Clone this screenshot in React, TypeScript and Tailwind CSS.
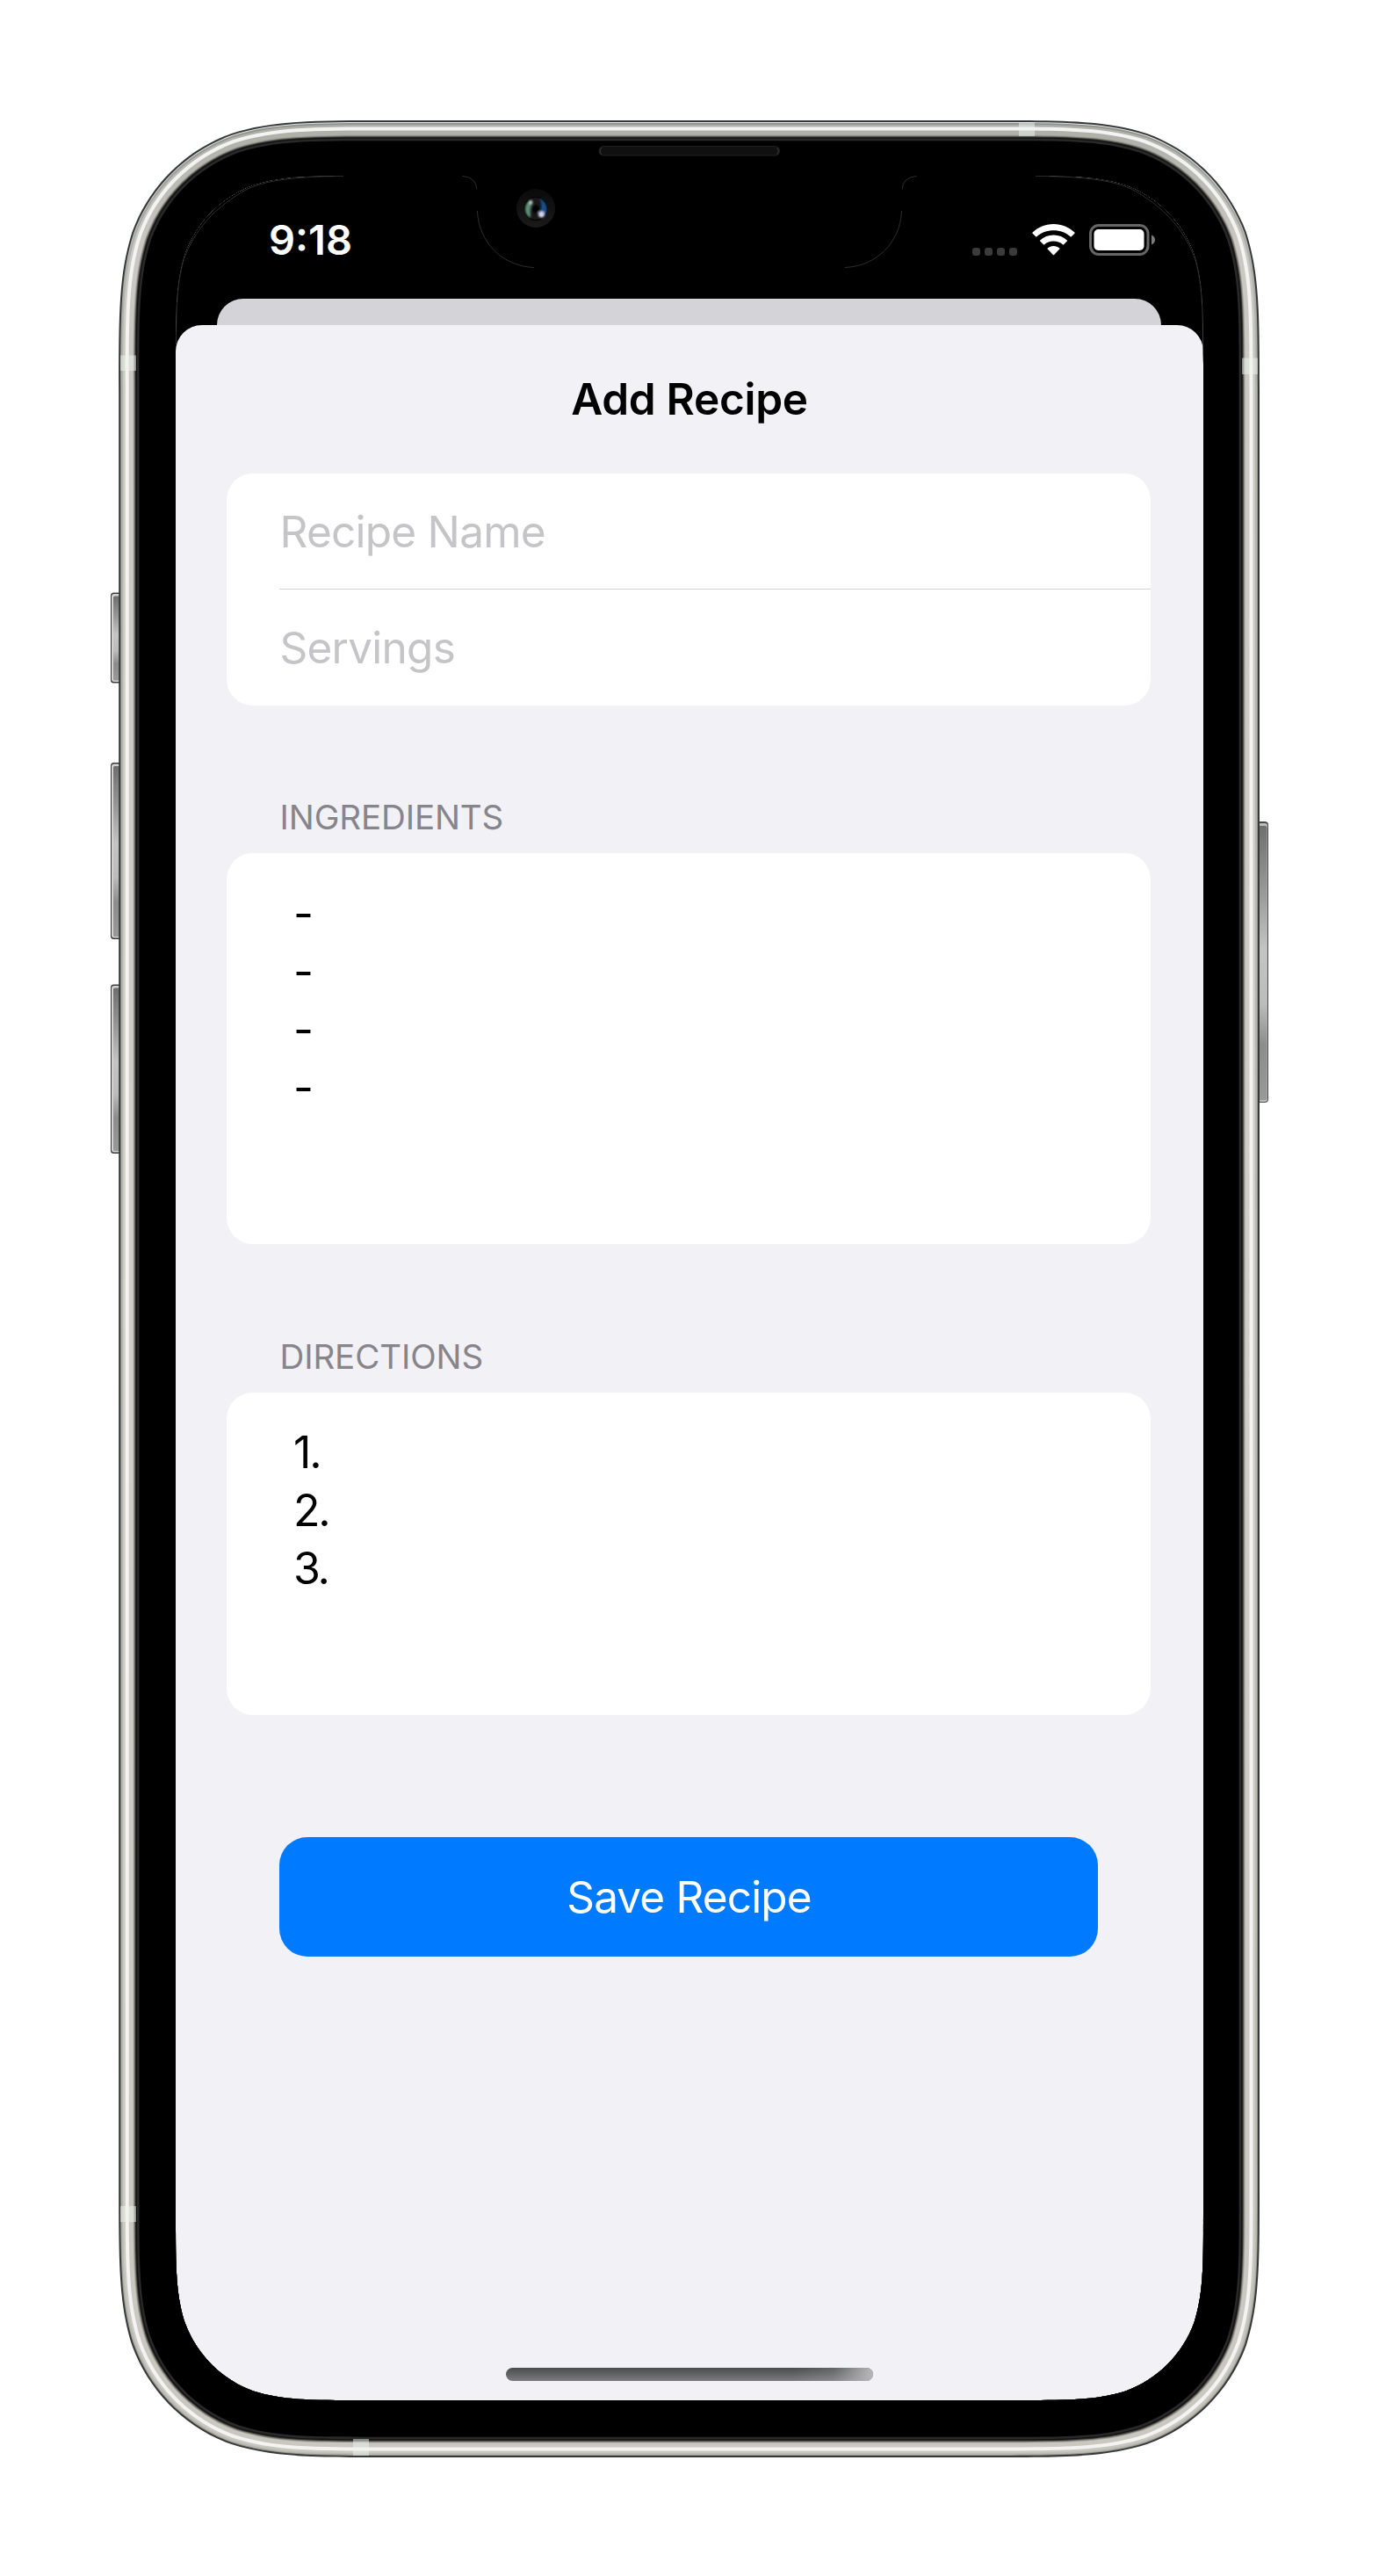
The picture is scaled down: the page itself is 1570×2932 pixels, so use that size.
/** Closed path of a rectangle with iOS-style continuous corners. */
function squircle(x: number, y: number, w: number, h: number, r: number) {
  const a = 1.52866 * r, b = 1.08849 * r, c = 0.86841 * r;
  const d = 0.63149 * r, e = 0.07491 * r, f = 0.37282 * r, g = 0.16906 * r;
  const R = x + w, B = y + h;
  return [
    `M${x + a} ${y}H${R - a}`,
    `C${R - b} ${y} ${R - c} ${y} ${R - d} ${y + e}`,
    `C${R - f} ${y + g} ${R - g} ${y + f} ${R - e} ${y + d}`,
    `C${R} ${y + c} ${R} ${y + b} ${R} ${y + a}V${B - a}`,
    `C${R} ${B - b} ${R} ${B - c} ${R - e} ${B - d}`,
    `C${R - g} ${B - f} ${R - f} ${B - g} ${R - d} ${B - e}`,
    `C${R - c} ${B} ${R - b} ${B} ${R - a} ${B}H${x + a}`,
    `C${x + b} ${B} ${x + c} ${B} ${x + d} ${B - e}`,
    `C${x + f} ${B - g} ${x + g} ${B - f} ${x + e} ${B - d}`,
    `C${x} ${B - c} ${x} ${B - b} ${x} ${B - a}V${y + a}`,
    `C${x} ${y + b} ${x} ${y + c} ${x + e} ${y + d}`,
    `C${x + g} ${y + f} ${x + f} ${y + g} ${x + d} ${y + e}`,
    `C${x + c} ${y} ${x + b} ${y} ${x + a} ${y}Z`,
  ].join("");
}

const SCREEN = squircle(200, 200, 1170, 2532, 140);

/** Frame rings from the outside in: [inset, fill]. */
const LAYERS: [number, string][] = [
  [0, "#363939"],
  [2, "url(#rim)"],
  [3, "url(#outer)"],
  [5, "url(#metal)"],
  [7.5, "#f3f3f1"],
  [11.5, "url(#metal)"],
  [16.5, "#a3a39c"],
  [17.5, "#77776f"],
  [18.5, "#30312f"],
  [19.5, "#121212"],
  [20.8, "#292929"],
  [23.3, "#000"],
];

/** Antenna bands: [x, y, width, height]. */
const BANDS: [number, number, number, number][] = [
  [137, 404.5, 18, 17.5],
  [1414, 407.5, 18, 18.5],
  [1160, 139, 18, 16],
  [402, 2776, 18, 19],
  [137, 2511, 18, 18],
];

/** Left-hand keys: [y, height]. */
const KEYS: [number, number][] = [
  [674.5, 103],
  [868, 201],
  [1120.5, 192.5],
];

function PhoneFrame() {
  return (
    <svg className="pointer-events-none absolute inset-0" width="1570" height="2932" viewBox="0 0 1570 2932">
      <defs>
        <linearGradient id="metal" x1="0" y1="0" x2="0" y2="1">
          <stop offset="0" stopColor="#b0b0ab" />
          <stop offset="0.05" stopColor="#c9c8c2" />
          <stop offset="0.5" stopColor="#cfcec8" />
          <stop offset="1" stopColor="#c8c7c0" />
        </linearGradient>
        <linearGradient id="outer" x1="0" y1="0" x2="0" y2="1">
          <stop offset="0" stopColor="#93938f" />
          <stop offset="0.06" stopColor="#b4b4ae" />
          <stop offset="1" stopColor="#bcbbb3" />
        </linearGradient>
        <linearGradient id="rim" x1="0" y1="0" x2="0" y2="1">
          <stop offset="0" stopColor="#e4e4e4" />
          <stop offset="0.08" stopColor="#9c9c98" />
          <stop offset="1" stopColor="#96968f" />
        </linearGradient>
        <linearGradient id="key" x1="0" y1="0" x2="0" y2="1">
          <stop offset="0" stopColor="#6f6f6f" />
          <stop offset="0.25" stopColor="#9a9a9a" />
          <stop offset="0.45" stopColor="#c4c4c4" />
          <stop offset="0.65" stopColor="#bcbcbc" />
          <stop offset="0.8" stopColor="#8c8c8c" />
          <stop offset="1" stopColor="#999" />
        </linearGradient>
        <linearGradient id="camRing" x1="0" y1="0" x2="0" y2="1">
          <stop offset="0" stopColor="#0a0a0a" />
          <stop offset="1" stopColor="#1a1a1a" />
        </linearGradient>
        <filter id="soft" x="-50%" y="-50%" width="200%" height="200%">
          <feGaussianBlur stdDeviation="0.8" />
        </filter>
      </defs>

      {KEYS.map(([y, h]) => (
        <g key={y}>
          <rect x="126" y={y} width="14" height={h} rx="3.5" fill="#3c3c3c" />
          <rect x="127" y={y + 1.5} width="13" height={h - 3} rx="3" fill="#d2d2d2" />
          <rect x="129" y={y + 4} width="10" height={h - 7} rx="1.5" fill="url(#key)" />
        </g>
      ))}
      <rect x="1428" y="935" width="16" height="320" rx="4" fill="#4a4a4a" />
      <rect x="1428" y="937" width="15" height="317" rx="3" fill="#bdbdbd" />
      <rect x="1428" y="940" width="14.5" height="312" rx="2" fill="url(#key)" />

      {LAYERS.map(([d, fill]) => (
        <path
          key={d}
          fillRule="evenodd"
          fill={fill}
          d={squircle(135.2 + d, 137 + d, 1298.8 - 2 * d, 2660 - 2 * d, 202 - d) + SCREEN}
        />
      ))}
      {BANDS.map(([x, y, w, h]) => (
        <rect key={`${x}-${y}`} x={x} y={y} width={w} height={h} fill="#f0f4ee" fillOpacity="0.5" />
      ))}

      <g fill="none" stroke="#3a3a3a" strokeWidth="0.8">
        <path d="M391 200.4C330 201 302 206 282 215C245 235 221 262 209 296C203 318 200.5 340 200.5 392" />
        <path d="M1179 200.4C1240 201 1268 206 1288 215C1325 235 1349 262 1361 296C1367 318 1369.5 340 1369.5 392" />
        <path d="M526.5 200.4Q542.5 202 542.8 215.5M543.4 240C545 276 572 303 608 304.5" />
        <path d="M1043.5 200.4Q1027.5 202 1027.2 215.5M1026.6 240C1025 276 998 303 962 304.5" />
      </g>

      <rect x="682" y="166.5" width="205.5" height="10.5" rx="5" fill="#101010" stroke="#1e1e1e" />
      <path d="M685 168q-3.5 4 0 8M884.5 168q3.5 4 0 8" fill="none" stroke="#3a3a3a" />

      <circle cx="610" cy="237" r="22" fill="url(#camRing)" />
      <circle cx="610" cy="237.5" r="13.8" fill="#040404" />
      <circle cx="610" cy="237.5" r="12.5" fill="#191717" />
      <g filter="url(#soft)">
        <path d="M604.5 227C596 232 596 243 603.5 248C605 244 603 241 604 237C605 233 607 230 604.5 227Z" fill="#5d8f78" />
        <path d="M614 226C624 230 625 242 618 248C612 246 614 243 616 238C617 233 616 229 614 226Z" fill="#17508f" />
        <circle cx="610" cy="238" r="4.5" fill="#060606" />
        <circle cx="604.3" cy="230.5" r="2.2" fill="#b9cfc4" />
        <circle cx="616.3" cy="244" r="3.4" fill="#d5d3ee" />
      </g>
    </svg>
  );
}

function StatusBar() {
  return (
    <div className="flex h-[140px] shrink-0 items-start justify-between bg-black pr-[54px] pl-[106px]">
      <span className="mt-[43px] text-[47px] leading-[60px] font-semibold text-white">9:18</span>
      <div className="mt-[55px] flex h-9 items-end">
        <div className="mr-[17px] flex gap-[5px]">
          {[0, 1, 2, 3].map((i) => (
            <span key={i} className="size-[9px] rounded-[3px] bg-[#3b3b3b]" />
          ))}
        </div>
        <svg className="mr-4" width="49" height="36" viewBox="0 0 49 36" fill="#fff">
          <path d="M24.5 0C33.8 0 42.2 3.6 48.4 9.5Q49 10.1 48.4 10.7L44.8 14.3Q44.2 14.9 43.6 14.3C38.6 9.7 31.9 7.2 24.5 7.2S10.4 9.7 5.4 14.3Q4.8 14.9 4.2 14.3L.6 10.7Q0 10.1 .6 9.5C6.8 3.6 15.2 0 24.5 0Z" />
          <path d="M24.5 12.5C30.4 12.5 35.8 14.7 39.8 18.4Q40.4 19 39.8 19.6L36.1 23.2Q35.5 23.8 34.9 23.2C32.1 20.8 28.5 19.5 24.5 19.5S16.9 20.8 14.1 23.2Q13.5 23.8 12.9 23.2L9.2 19.6Q8.6 19 9.2 18.4C13.2 14.7 18.6 12.5 24.5 12.5Z" />
          <path d="M24.5 25C27.1 25 29.5 25.9 31.3 27.4Q31.9 28 31.3 28.6L25.1 34.9Q24.5 35.5 23.9 34.9L17.7 28.6Q17.1 28 17.7 27.4C19.5 25.9 21.9 25 24.5 25Z" />
        </svg>
        <svg width="76" height="36" viewBox="0 0 76 36">
          <rect x="1.5" y="1.5" width="65.5" height="33" rx="9.5" fill="none" stroke="#666" strokeWidth="3" />
          <rect x="5.5" y="6" width="57" height="24" rx="5" fill="#fff" />
          <path d="M71 12.5Q75 14.5 75 18T71 23.5Z" fill="#7c7c7c" />
        </svg>
      </div>
    </div>
  );
}

function EditorSection({ label, lines, box }: { label: string; lines: string[]; box: string }) {
  return (
    <section>
      <h2 className="pl-[60.5px] text-[38.5px] leading-[60px] font-normal tracking-[-0.1px] text-[#86858b]">{label}</h2>
      <div className={`mt-[11.5px] rounded-[30px] bg-white pl-[76px] ${box}`}>
        {lines.map((line, i) => (
          <p key={i} className="text-[50px] leading-[66.1px] tracking-[-2.2px] text-black">
            {line}
          </p>
        ))}
      </div>
    </section>
  );
}

function RecipeSheet() {
  return (
    <main className="flex flex-1 flex-col rounded-t-[30px] bg-[#f2f1f6] pr-[60px] pl-[58px]">
      <h1 className="mt-[54px] pl-[2px] text-center text-[49.5px] leading-[60px] font-semibold tracking-[-0.3px] text-black">
        Add Recipe
      </h1>
      <div className="mt-[54.5px] rounded-[30px] bg-white pl-[60px] text-[49.5px] tracking-[-0.75px] text-[#c5c5c7]">
        <div className="flex h-[132px] items-center border-b border-[#d4d4d6] pt-[2px] pl-[0.5px]">Recipe Name</div>
        <div className="flex h-[132.5px] items-center pt-[1px] pl-[0.5px]">Servings</div>
      </div>
      <div className="mt-[96.5px]">
        <EditorSection label="INGREDIENTS" lines={["-", "-", "-", "-"]} box="h-[445px] pt-[36px]" />
      </div>
      <div className="mt-[97.5px]">
        <EditorSection label="DIRECTIONS" lines={["1.", "2.", "3."]} box="h-[367px] pt-[34.5px]" />
      </div>
      <button className="mx-[60px] mt-[139px] h-[135.5px] shrink-0 rounded-[32px] bg-[#007bff] pl-[1px] text-[49.5px] tracking-[-0.85px] text-white">
        Save Recipe
      </button>
      <div className="mt-auto mr-[-2px] mb-[22px] h-[15px] w-[418px] self-center overflow-hidden rounded-full bg-linear-to-b from-[#4b4d4d] to-[#7d7b7e]">
        <div className="ml-auto h-full w-[90px] bg-linear-to-r from-[#b8b8ba]/0 via-[#b8b8ba]/20 to-[#b8b8ba]" />
      </div>
    </main>
  );
}

export default function App() {
  return (
    <div className="relative h-[2932px] w-[1570px] bg-white p-[200px] font-['Inter',sans-serif]">
      <div className="flex h-[2532px] w-[1170px] flex-col bg-black">
        <StatusBar />
        <div className="mr-[48px] mb-[-30px] ml-[47px] h-[60px] shrink-0 rounded-t-[30px] bg-[#d4d3d8]" />
        <RecipeSheet />
      </div>
      <PhoneFrame />
    </div>
  );
}
